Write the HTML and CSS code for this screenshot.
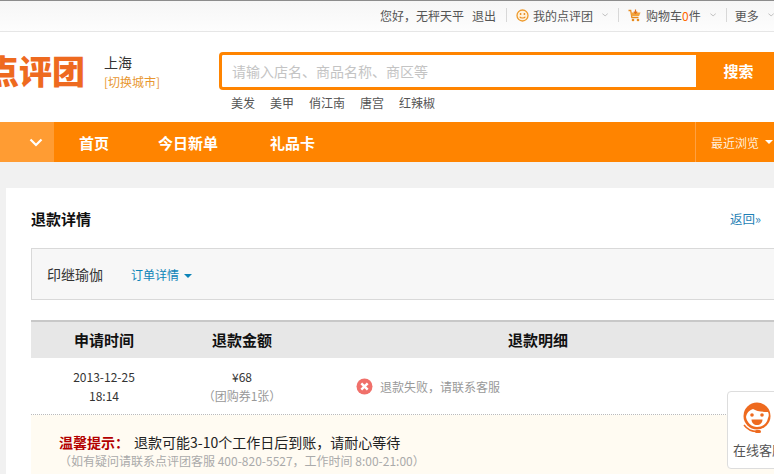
FILE: index.html
```html
<!DOCTYPE html>
<html>
<head>
  <meta charset="utf-8">
  <link rel="stylesheet" href="styles.css">
</head>
<body>
  <div class="topbar">
    <span class="hello">您好，无秤天平</span>
    <a class="logout">退出</a>
    <i class="sep sep-a"></i>
    <svg class="ico" width="13" height="13" viewBox="0 0 13 13">
      <circle cx="6.5" cy="6.5" r="5.5" fill="#fff3dc" stroke="#ee9a2c" stroke-width="1.3"/>
      <circle cx="4.6" cy="5" r=".9" fill="#e88a1c"/>
      <circle cx="8.4" cy="5" r=".9" fill="#e88a1c"/>
      <path d="M3.7 7.8c.8 1.6 4.8 1.6 5.6 0" fill="none" stroke="#e88a1c" stroke-width="1.1"/>
    </svg>
    <a class="mine">我的点评团</a>
    <svg class="chev chev-a" width="7" height="4" viewBox="0 0 7 4"><path d="M.5.5l3 2.5 3-2.5" fill="none" stroke="#bbb"/></svg>
    <i class="sep sep-b"></i>
    <svg class="ico" width="13" height="13" viewBox="0 0 13 13">
      <path d="M.5 1.5h2.2l1.2 7h6.600" fill="none" stroke="#e88a1c" stroke-width="1.3"/>
      <path d="M3 3.5h9.500l-1.400 3.600H3.600z" fill="#f2a33c"/>
      <path d="M7.500 .5v3.600M5.800 2.600l1.700 1.800 1.700-1.800" fill="none" stroke="#e0701a" stroke-width="1.2"/>
      <circle cx="5" cy="11" r="1.3" fill="#e88a1c"/>
      <circle cx="10" cy="11" r="1.3" fill="#e88a1c"/>
    </svg>
    <a class="cart">购物车<em>0</em>件</a>
    <svg class="chev chev-b" width="7" height="4" viewBox="0 0 7 4"><path d="M.5.5l3 2.5 3-2.5" fill="none" stroke="#bbb"/></svg>
    <i class="sep sep-c"></i>
    <a class="more">更多</a>
    <svg class="chev chev-c" width="7" height="4" viewBox="0 0 7 4"><path d="M.5.5l3 2.5 3-2.5" fill="none" stroke="#bbb"/></svg>
  </div>

  <div class="header">
    <div class="logo">点评团</div>
    <div class="city">
      <div class="city-name">上海</div>
      <a class="city-change">[切换城市]</a>
    </div>
    <div class="search">
      <div class="search-row">
        <div class="search-input">请输入店名、商品名称、商区等</div>
        <div class="search-btn">搜索</div>
      </div>
      <div class="hot">
        <a>美发</a>
        <a>美甲</a>
        <a>俏江南</a>
        <a>唐宫</a>
        <a>红辣椒</a>
      </div>
    </div>
  </div>

  <div class="nav">
    <div class="nav-toggle">
      <svg width="14" height="9" viewBox="0 0 14 9"><path d="M1.500 1.500L7 7l5.500-5.500" fill="none" stroke="#fff" stroke-width="2.2"/></svg>
    </div>
    <a class="nav-item nav-home">首页</a>
    <a class="nav-item nav-new">今日新单</a>
    <a class="nav-item nav-gift">礼品卡</a>
    <div class="recent">最近浏览<i class="recent-arrow"></i></div>
  </div>

  <div class="card">
    <div class="card-head">
      <h2>退款详情</h2>
      <a class="back">返回»</a>
    </div>
    <div class="order-box">
      <span class="order-name">印继瑜伽</span>
      <a class="order-link">订单详情<i class="link-arrow"></i></a>
    </div>
    <div class="grid grid-head">
      <div>申请时间</div>
      <div>退款金额</div>
      <div>退款明细</div>
      <div></div>
    </div>
    <div class="grid grid-row">
      <div class="cell-date">2013-12-25<br>18:14</div>
      <div class="cell-money">¥68<br><span>（团购券1张）</span></div>
      <div class="cell-state">
        <svg width="17" height="17" viewBox="0 0 17 17">
          <circle cx="8.500" cy="8.500" r="8" fill="#f0706a"/>
          <path d="M5.300 5.300l6.400 6.400M11.700 5.300l-6.400 6.400" stroke="#fff" stroke-width="2.4"/>
        </svg>
        退款失败，请联系客服
      </div>
      <div></div>
    </div>
    <div class="tip">
      <div class="tip-main"><b>温馨提示：</b><span class="tip-text">退款可能3-10个工作日后到账，请耐心等待</span></div>
      <div class="tip-sub">（如有疑问请联系点评团客服 400-820-5527，工作时间 8:00-21:00）</div>
    </div>
  </div>

  <div class="service">
    <svg width="34" height="32" viewBox="0 0 34 32">
      <circle cx="17" cy="14" r="13.500" fill="#ee6a1f"/>
      <path d="M6 15c1-5 4-7 7-8 3 2 9 3 15 3 1 2 1 4 0 6-1 6-6 9-11 9S7 21 6 15z" fill="#fff"/>
      <circle cx="12" cy="13" r="1.800" fill="#ee6a1f"/>
      <circle cx="22" cy="13" r="1.800" fill="#ee6a1f"/>
      <path d="M11.500 17.500h11c0 3.500-2.500 5.500-5.500 5.500s-5.500-2-5.500-5.500z" fill="#ee6a1f"/>
      <path d="M4 23c3 4 8 6.500 13 6.500" fill="none" stroke="#ee6a1f" stroke-width="1.500"/>
      <rect x="15" y="28" width="6" height="3" rx="1.500" fill="#ee6a1f"/>
    </svg>
    <div class="service-text">在线客服</div>
  </div>
</body>
</html>
```

FILE: styles.css
```css
* {
  margin: 0;
  padding: 0;
  box-sizing: border-box;
}
html, body {
  width: 774px;
  height: 474px;
  overflow: hidden;
}
body {
  position: relative;
  background: #f1f1f1;
  font-family: "Noto Sans CJK SC", "Liberation Sans", sans-serif;
  font-size: 12px;
  color: #333;
}
i, em {
  font-style: normal;
}

/* top bar */
.topbar {
  height: 32px;
  display: flex;
  align-items: center;
  justify-content: flex-start;
  padding: 0 0 2px 380px;
  background: linear-gradient(#f6f6f6, #fdfdfd);
  border-top: 1px solid #8c8c8c;
  border-bottom: 1px solid #e6e6e6;
  color: #555;
  white-space: nowrap;
}
.logout {
  margin-left: 8px;
}
.sep {
  width: 1px;
  height: 14px;
  background: #d8d8d8;
}
.sep-a {
  margin: 0 9px 0 10px;
}
.sep-b {
  margin: 0 9px 0 10px;
}
.sep-c {
  margin: 0 8px 0 10px;
}
.ico {
  flex: none;
}
.mine {
  margin-left: 4px;
}
.chev-a {
  margin-left: 9px;
}
.cart {
  margin-left: 5px;
}
.cart em {
  color: #f60;
}
.chev-b {
  margin-left: 9px;
}
.chev-c {
  margin-left: 9px;
}

/* header */
.header {
  height: 90px;
  display: flex;
  background: #fff;
  overflow: hidden;
}
.logo {
  flex: none;
  width: 99px;
  margin-left: -14px;
  padding-top: 15px;
  font-size: 33px;
  line-height: 47px;
  font-weight: 900;
  color: #ee6a1f;
  white-space: nowrap;
}
.city {
  flex: none;
  width: 134px;
  padding: 21px 0 0 19px;
}
.city-name {
  font-size: 14px;
  line-height: 19px;
  color: #333;
}
.city-change {
  display: block;
  line-height: 20px;
  color: #e8962e;
}
.search {
  flex: 1;
  padding-top: 20px;
}
.search-row {
  display: flex;
  height: 38px;
}
.search-input {
  width: 477px;
  flex: none;
  padding-left: 10px;
  border: 3px solid #ff8400;
  border-right: 0;
  border-radius: 4px 0 0 4px;
  font-size: 14px;
  line-height: 32px;
  color: #c4c4c4;
}
.search-btn {
  flex: 1;
  padding-left: 7px;
  background: #ff8400;
  color: #fff;
  font-size: 15px;
  font-weight: 700;
  line-height: 38px;
  text-align: center;
}
.hot {
  display: flex;
  gap: 15px;
  padding: 4px 0 0 12px;
  line-height: 18px;
  color: #555;
}

/* nav */
.nav {
  height: 40px;
  display: flex;
  align-items: center;
  background: #ff8400;
  color: #fff;
  white-space: nowrap;
}
.nav-toggle {
  width: 54px;
  height: 40px;
  display: flex;
  align-items: center;
  justify-content: flex-end;
  padding-right: 11px;
  background: #ff9c33;
}
.nav-item {
  font-size: 15px;
  font-weight: 700;
}
.nav-home {
  margin-left: 25px;
}
.nav-new {
  margin-left: 49px;
}
.nav-gift {
  margin-left: 52px;
}
.recent {
  margin-left: auto;
  width: 79px;
  height: 40px;
  padding-left: 15px;
  display: flex;
  align-items: center;
  border-left: 1px solid #ffa040;
  color: #ffeeda;
}
.recent-arrow {
  margin-left: 6px;
  border-top: 4px solid #fff;
  border-left: 4px solid transparent;
  border-right: 4px solid transparent;
}

/* refund card */
.card {
  height: 286px;
  margin: 26px 0 0 6px;
  padding-left: 25px;
  background: #fff;
}
.card-head {
  height: 60px;
  display: flex;
  align-items: center;
  justify-content: space-between;
}
.card-head h2 {
  font-size: 15px;
  font-weight: 700;
  color: #111;
}
.back {
  margin-right: 13px;
  font-size: 12.500px;
  color: #1f7fb5;
}
.order-box {
  height: 52px;
  display: flex;
  align-items: center;
  padding-left: 15px;
  background: #f7f7f7;
  border: 1px solid #d9d9d9;
  border-right: 0;
}
.order-name {
  font-size: 14px;
  color: #333;
}
.order-link {
  margin-left: 28px;
  color: #0d84b8;
}
.link-arrow {
  display: inline-block;
  margin-left: 5px;
  vertical-align: 2px;
  border-top: 4px solid #0d84b8;
  border-left: 4px solid transparent;
  border-right: 4px solid transparent;
}
.grid {
  display: grid;
  grid-template-columns: 146px 130px 462px 1fr;
  text-align: center;
}
.grid-head {
  height: 38px;
  margin-top: 20px;
  border-top: 2px solid #c8c8c8;
  background: #e7e7e7;
  font-size: 15px;
  font-weight: 700;
  line-height: 36px;
  color: #111;
}
.grid-row {
  height: 57px;
  align-items: center;
  border-bottom: 1px dotted #bbb;
  line-height: 19px;
  color: #333;
}
.cell-money span {
  color: #999;
}
.cell-state {
  display: flex;
  align-items: center;
  gap: 7px;
  padding-left: 49px;
  color: #999;
}
.tip {
  height: 60px;
  padding: 17px 0 0 28px;
  background: #fffbf2;
}
.tip-main {
  font-size: 14px;
  line-height: 20px;
  color: #222;
}
.tip-main b {
  color: #b30000;
}
.tip-text {
  margin-left: 5px;
}
.tip-sub {
  margin-top: 1px;
  line-height: 16px;
  color: #aaa;
}

/* floating service button */
.service {
  position: absolute;
  left: 727px;
  top: 391px;
  width: 60px;
  height: 78px;
  padding-top: 10px;
  background: #fff;
  border: 1px solid #ddd;
  border-radius: 4px;
  white-space: nowrap;
}
.service svg {
  display: block;
  margin-left: 12px;
}
.service-text {
  margin: 7px 0 0 5px;
  font-size: 13px;
  line-height: 18px;
  color: #555;
}
```
